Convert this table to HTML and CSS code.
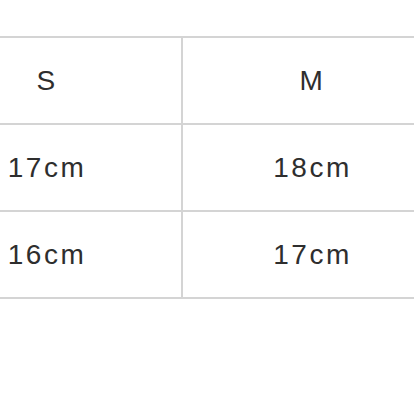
FILE: index.html
```
<!DOCTYPE html>
<html>
<head>
<meta charset="utf-8">
<link rel="stylesheet" href="styles.css">
</head>
<body>
<div class="page">
  <div class="size-table">
    <div class="cell">S</div>
    <div class="cell right">M</div>
    <div class="cell">17cm</div>
    <div class="cell right">18cm</div>
    <div class="cell last">16cm</div>
    <div class="cell right last">17cm</div>
  </div>
</div>
</body>
</html>
```
FILE: styles.css
```
html, body {
  margin: 0;
  padding: 0;
  background: #ffffff;
  overflow: hidden;
}
.page {
  width: 414px;
  height: 414px;
  overflow: hidden;
  padding-top: 36px;
  box-sizing: border-box;
}
.size-table {
  display: grid;
  grid-template-columns: 268px 261px;
  margin-left: -87px;
  width: 529px;
}
.cell {
  height: 85px;
  border-top: 2px solid #d4d4d4;
  display: flex;
  align-items: center;
  justify-content: center;
  font-family: "Liberation Sans", Arial, sans-serif;
  font-size: 28px;
  letter-spacing: 2.5px;
  color: #2e2e2e;
}
.right {
  border-left: 2px solid #d4d4d4;
}
.last {
  border-bottom: 2px solid #d4d4d4;
}
```
